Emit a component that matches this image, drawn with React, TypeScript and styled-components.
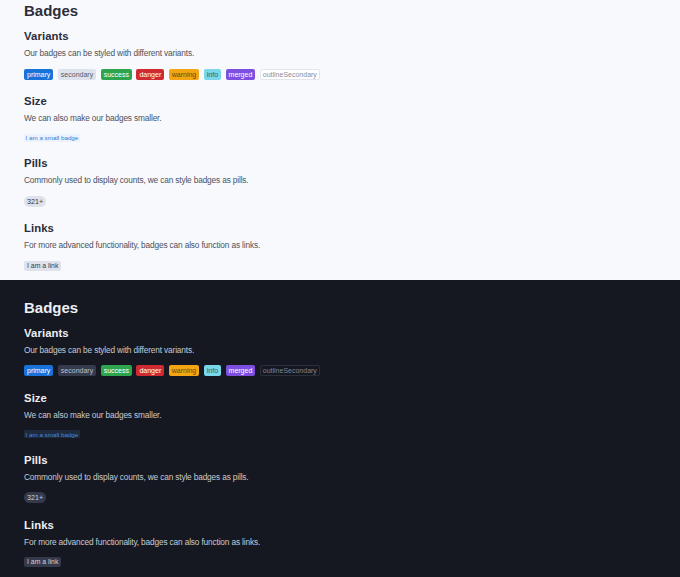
import React from 'react'
import styled, { createGlobalStyle, css } from 'styled-components'

type Mode = 'light' | 'dark'

const palette = {
  light: {
    bg: '#f8f9fc',
    heading: '#2a2e3a',
    text: '#4c515d',
    secondaryBg: '#dee2ec',
    secondaryText: '#555b6b',
    outlineBorder: '#e3e6ed',
    outlineText: '#8a8e9a',
    outlineBg: '#ffffff',
    smallBg: '#ecf2fc',
    smallText: '#2f7fdc',
    neutralBg: '#dfe2ea',
    neutralText: '#353944',
  },
  dark: {
    bg: '#151821',
    heading: '#eceef3',
    text: '#c7cad3',
    secondaryBg: '#353a4c',
    secondaryText: '#bcc0cd',
    outlineBorder: '#2b2f3c',
    outlineText: '#7e8392',
    outlineBg: 'transparent',
    smallBg: '#1f2a3c',
    smallText: '#3f86dc',
    neutralBg: '#343a4b',
    neutralText: '#cfd2db',
  },
}

type Variant =
  | 'primary'
  | 'secondary'
  | 'success'
  | 'danger'
  | 'warning'
  | 'info'
  | 'merged'
  | 'outlineSecondary'

const variantStyle = (variant: Variant, mode: Mode) => {
  const p = palette[mode]
  switch (variant) {
    case 'primary':
      return css`background: #1773da; color: #ffffff;`
    case 'secondary':
      return css`background: ${p.secondaryBg}; color: ${p.secondaryText};`
    case 'success':
      return css`background: #2ea44f; color: #ffffff;`
    case 'danger':
      return css`background: #cf2a31; color: #ffffff;`
    case 'warning':
      return css`background: #f3a514; color: #6a4805;`
    case 'info':
      return css`background: #7ad7e9; color: #1f5f6e;`
    case 'merged':
      return css`background: #7d4fe0; color: #ffffff;`
    case 'outlineSecondary':
      return css`
        background: ${p.outlineBg};
        color: ${p.outlineText};
        border: 1px solid ${p.outlineBorder};
        padding: 0 2px;
      `
  }
}

const GlobalStyle = createGlobalStyle`
  body {
    margin: 0;
    font-family: "Liberation Sans", Arial, sans-serif;
  }
`

const Page = styled.div`
  width: 680px;
`

const Section = styled.section<{ $mode: Mode }>`
  background: ${({ $mode }) => palette[$mode].bg};
  padding: ${({ $mode }) => ($mode === 'light' ? '2px 24px 9.5px' : '18.7px 24px 12px')};
`

const Title = styled.h1<{ $mode: Mode }>`
  margin: 0;
  font-size: 15px;
  line-height: 18px;
  font-weight: 700;
  color: ${({ $mode }) => palette[$mode].heading};
`

const Block = styled.div`
  margin-top: 14.5px;

  &:first-of-type {
    margin-top: 9px;
  }
`

const Heading = styled.h3<{ $mode: Mode }>`
  margin: 0;
  font-size: 11.3px;
  line-height: 14px;
  font-weight: 700;
  letter-spacing: 0.1px;
  color: ${({ $mode }) => palette[$mode].heading};
`

const Desc = styled.p<{ $mode: Mode }>`
  margin: 5px 0 0;
  font-size: 8.3px;
  line-height: 11px;
  letter-spacing: -0.15px;
  color: ${({ $mode }) => palette[$mode].text};
`

const Row = styled.div`
  display: flex;
  align-items: center;
  gap: 4.5px;
  margin-top: 9.5px;
`

const Badge = styled.span<{ $variant: Variant; $mode: Mode }>`
  display: inline-block;
  font-size: 7px;
  line-height: 9px;
  padding: 1px 3px;
  border-radius: 2px;
  ${({ $variant, $mode }) => variantStyle($variant, $mode)}
`

const SmallBadge = styled.span<{ $mode: Mode }>`
  display: inline-block;
  font-size: 6.25px;
  line-height: 7px;
  padding: 0.5px 1.5px;
  border-radius: 1px;
  background: ${({ $mode }) => palette[$mode].smallBg};
  color: ${({ $mode }) => palette[$mode].smallText};
`

const Pill = styled.span<{ $mode: Mode }>`
  display: inline-block;
  font-size: 7.2px;
  line-height: 9px;
  padding: 1px 3px;
  border-radius: 999px;
  background: ${({ $mode }) => palette[$mode].neutralBg};
  color: ${({ $mode }) => palette[$mode].neutralText};
`

const LinkBadge = styled.a<{ $mode: Mode }>`
  display: inline-block;
  font-size: 6.9px;
  line-height: 8px;
  padding: 1px 3px;
  border-radius: 2px;
  text-decoration: none;
  background: ${({ $mode }) => palette[$mode].neutralBg};
  color: ${({ $mode }) => palette[$mode].neutralText};
`

const variants: Variant[] = [
  'primary',
  'secondary',
  'success',
  'danger',
  'warning',
  'info',
  'merged',
  'outlineSecondary',
]

const BadgesDemo: React.FC<{ mode: Mode }> = ({ mode }) => (
  <Section $mode={mode}>
    <Title $mode={mode}>Badges</Title>
    <Block>
      <Heading $mode={mode}>Variants</Heading>
      <Desc $mode={mode}>Our badges can be styled with different variants.</Desc>
      <Row>
        {variants.map((v) => (
          <Badge key={v} $variant={v} $mode={mode}>
            {v}
          </Badge>
        ))}
      </Row>
    </Block>
    <Block>
      <Heading $mode={mode}>Size</Heading>
      <Desc $mode={mode}>We can also make our badges smaller.</Desc>
      <Row>
        <SmallBadge $mode={mode}>I am a small badge</SmallBadge>
      </Row>
    </Block>
    <Block>
      <Heading $mode={mode}>Pills</Heading>
      <Desc $mode={mode}>Commonly used to display counts, we can style badges as pills.</Desc>
      <Row>
        <Pill $mode={mode}>321+</Pill>
      </Row>
    </Block>
    <Block>
      <Heading $mode={mode}>Links</Heading>
      <Desc $mode={mode}>For more advanced functionality, badges can also function as links.</Desc>
      <Row>
        <LinkBadge $mode={mode} href="#">
          I am a link
        </LinkBadge>
      </Row>
    </Block>
  </Section>
)

export default function App() {
  return (
    <Page>
      <GlobalStyle />
      <BadgesDemo mode="light" />
      <BadgesDemo mode="dark" />
    </Page>
  )
}
